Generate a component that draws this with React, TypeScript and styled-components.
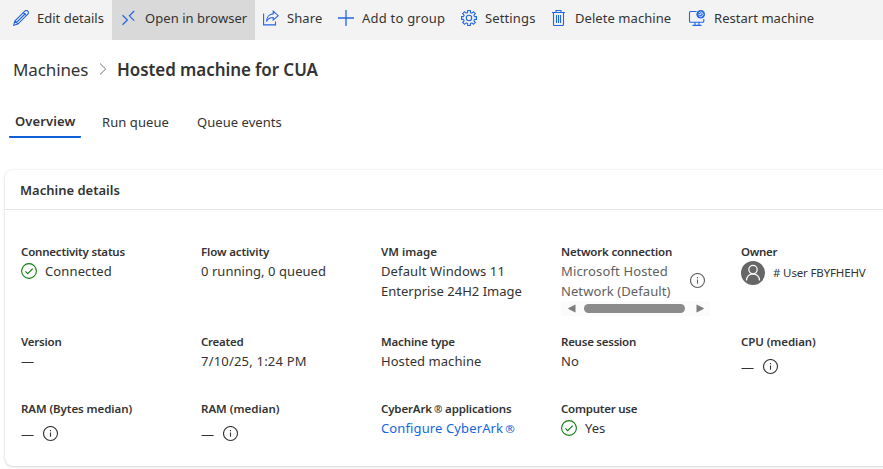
import React from "react";
import styled, { createGlobalStyle } from "styled-components";

const GlobalStyle = createGlobalStyle`
  * { box-sizing: border-box; }
  html, body { margin: 0; background: #fff; overflow: hidden; }
  body { font-family: "Noto Sans", "Open Sans", sans-serif; color: #333; }
`;

const Page = styled.div`
  width: 883px;
  height: 469px;
  overflow: hidden;
`;

const Label = styled.span<{ $ls?: number }>`
  letter-spacing: ${(p) => p.$ls ?? 0}px;
  white-space: nowrap;
`;

const Toolbar = styled.div`
  display: grid;
  grid-template-columns: 107px 143px 75px 123px 90px 137px 150px;
  height: 40px;
  padding-left: 5px;
  background: #f3f3f3;
`;

const Command = styled.button<{ $active?: boolean }>`
  display: flex;
  align-items: center;
  gap: 8px;
  border: 0;
  padding: 0 0 4px ${(p) => (p.$active ? 9 : 8)}px;
  background: ${(p) => (p.$active ? "#d9d9d9" : "transparent")};
  color: #333;
  font: 13px/20px "Noto Sans", sans-serif;
  svg { flex: none; }
`;

const Breadcrumb = styled.nav`
  display: flex;
  align-items: center;
  height: 58px;
  margin-bottom: 2px;
  padding-left: 13px;
  font-size: 17px;
  svg { margin: 0 10px 0 9px; }
`;

const CrumbLink = styled.div`
  width: 77px;
  white-space: nowrap;
`;

const CrumbTitle = styled.div`
  font-weight: 600;
  white-space: nowrap;
`;

const Tabs = styled.div`
  display: grid;
  grid-template-columns: 72px 15px 83px 12px 101px;
  height: 70px;
  padding: 8px 0 0 9px;
`;

const Tab = styled.div<{ $selected?: boolean; $column: number }>`
  grid-column: ${(p) => p.$column};
  height: 30px;
  padding-left: 6px;
  font-size: 13px;
  line-height: ${(p) => (p.$selected ? 27 : 29)}px;
  font-weight: ${(p) => (p.$selected ? 600 : 400)};
  border-bottom: 2px solid ${(p) => (p.$selected ? "#0f5fdc" : "transparent")};
  border-radius: 1px;
  white-space: nowrap;
`;

const Card = styled.section`
  height: 296px;
  width: 900px;
  margin-left: 5px;
  border-radius: 8px;
  background: #fff;
  box-shadow: 0 0 2px rgba(0, 0, 0, 0.1), 0 1px 3px rgba(0, 0, 0, 0.14);
`;

const CardHeader = styled.h2`
  height: 40px;
  margin: 0;
  padding-left: 15px;
  border-bottom: 1px solid #e6e6e6;
  font-size: 13px;
  font-weight: 600;
  line-height: 40px;
`;

const Details = styled.div`
  display: grid;
  grid-template-columns: repeat(4, 180px) 142px;
  grid-template-rows: 90px 67px 60px;
  padding: 33px 0 0 16px;
`;

const Field = styled.div`
  min-width: 0;
`;

const FieldName = styled.div<{ $ls?: number }>`
  height: 18px;
  font-size: 11.5px;
  font-weight: 600;
  line-height: 18px;
  letter-spacing: ${(p) => p.$ls ?? 0}px;
  white-space: nowrap;
`;

const Value = styled.div<{ $muted?: boolean; $link?: boolean }>`
  display: flex;
  align-items: center;
  font-size: 13px;
  line-height: 20px;
  color: ${(p) => (p.$link ? "#1267e0" : p.$muted ? "#616161" : "#333")};
  svg { flex: none; }
`;

const Status = styled(Value)`
  gap: 8px;
`;

const Lines = styled.div`
  display: flex;
  flex-direction: column;
`;

const Owner = styled(Value)`
  gap: 8px;
  font-size: 11.5px;
  height: 24px;
`;

const Metric = styled(Value)`
  gap: 8px;
  height: 31px;
`;

const Dash = styled.span`
  width: 14px;
  overflow: hidden;
  white-space: nowrap;
`;

const Registered = styled.span`
  margin-left: 2px;
  font-size: 0.88em;
`;

const Network = styled(Value)`
  width: 145px;
  justify-content: space-between;
  svg { margin-bottom: 1px; }
`;

const Scrollbar = styled.div`
  display: flex;
  align-items: center;
  width: 149px;
  height: 15px;
  padding-left: 7px;
  background: #fbfbfb;
`;

const Thumb = styled.div`
  width: 101px;
  height: 9px;
  margin: 0 11px 0 8px;
  border-radius: 5px;
  background: #8b8b8b;
`;

const Glyph = ({ children, w = 16, h = 16 }: { children: React.ReactNode; w?: number; h?: number }) => (
  <svg width={w} height={h} viewBox={`0 0 ${w} ${h}`} fill="none" stroke="#2266e3" strokeWidth="1.1">
    {children}
  </svg>
);

const Pencil = () => (
  <Glyph>
    <path d="M.7 15.3 1.8 11 11.8 1.2a2.1 2.1 0 0 1 3 3L4.9 14.1.7 15.3ZM10.3 2.7l3 3M2 11l3 3M3.5 12.5l9-9" />
  </Glyph>
);

const Remote = () => (
  <Glyph>
    <path d="M1.5 5.2 6.4 10l-4.9 4.8M13.2 1 8.4 5.8l4.8 4.8" strokeWidth="1.2" />
  </Glyph>
);

const Share = () => (
  <Glyph>
    <path d="M.6 3.5v11.4h11.9v-3.5M10.2 1.2l5 4.5-5 4.4V7.5C7.3 7.5 5 8.6 3.5 11.5 3.7 7.2 6.2 4 10.2 3.9V1.2Z" />
  </Glyph>
);

const Plus = () => (
  <Glyph>
    <path d="M8 0v16M0 8h16" strokeWidth="1.3" />
  </Glyph>
);

const gearPath = Array.from({ length: 8 }, (_, i) => {
  const at = (radius: number, degrees: number) => {
    const angle = ((i * 45 + degrees) * Math.PI) / 180;
    return `${(8 + radius * Math.cos(angle)).toFixed(2)} ${(8 + radius * Math.sin(angle)).toFixed(2)}`;
  };
  return `${i ? "L" : "M"}${at(5.8, -14)}L${at(7.7, -10)}L${at(7.7, 10)}L${at(5.8, 14)}Q${at(5.2, 22.5)} ${at(5.8, 31)}`;
}).join("");

const Gear = () => (
  <Glyph>
    <path d={gearPath + "Z"} />
    <circle cx="8" cy="8" r="2.7" />
  </Glyph>
);

const Trash = () => (
  <Glyph>
    <path d="M1 2.5h13M5 2.5v-2h5v2M2.5 2.5v12q0 1 1 1h8q1 0 1-1v-12M5.5 5v8M7.5 5v8M9.5 5v8" />
  </Glyph>
);

const Restart = () => (
  <Glyph w={18}>
    <path d="M8.5 1.5H2.5q-1 0-1 1v8.8q0 1 1 1h12.3q1 0 1-1V9M4.5 15.4h9M7 12.5v3M11 12.5v3" />
    <circle cx="12.7" cy="4.3" r="4.3" fill="#2266e3" stroke="none" />
    <path d="M10.8 3.1a2.3 2.3 0 1 1-.1 2.3M10.5 4.4h2.6M13 2.9v1.7" stroke="#fff" strokeWidth=".8" />
  </Glyph>
);

const Chevron = () => (
  <svg width="8" height="12" viewBox="0 0 8 12" fill="none" stroke="#777">
    <path d="m1 .5 5.7 5.5L1 11.5" />
  </svg>
);

const Check = () => (
  <svg width="16" height="16" viewBox="0 0 16 16" fill="none" stroke="#107c10" strokeWidth="1.1">
    <circle cx="8" cy="8" r="7.4" />
    <path d="m4.4 8.3 2.3 2.3 5-5" />
  </svg>
);

const Info = ({ color = "#333" }: { color?: string }) => (
  <svg width="16" height="16" viewBox="0 0 16 16" fill="none" stroke={color} strokeWidth="1.1">
    <circle cx="7.5" cy="7.5" r="7" />
    <path d="M7.5 6.5v4.2M7.5 4v1.2" />
  </svg>
);

const Avatar = () => (
  <svg width="24" height="24" viewBox="0 0 24 24" fill="none" stroke="#fff" strokeWidth="1.2">
    <circle cx="12" cy="12" r="12" fill="#666" stroke="none" />
    <circle cx="12" cy="8.6" r="4.2" />
    <path d="M5.5 19.5c0-4 2.8-6.7 6.5-6.7s6.5 2.7 6.5 6.7" />
  </svg>
);

const Arrow = ({ left }: { left?: boolean }) => (
  <svg width="8" height="9" viewBox="0 0 8 9" fill="#7d7d7d">
    <path d={left ? "M7.5.5v8L.5 5q-.6-.5 0-1Z" : "M.5.5v8L7.5 5q.6-.5 0-1Z"} />
  </svg>
);

const commands = [
  { text: "Edit details", icon: <Pencil />, ls: 0 },
  { text: "Open in browser", icon: <Remote />, ls: 0.05, active: true },
  { text: "Share", icon: <Share />, ls: 0.1 },
  { text: "Add to group", icon: <Plus />, ls: 0.22 },
  { text: "Settings", icon: <Gear />, ls: 0.13 },
  { text: "Delete machine", icon: <Trash />, ls: 0.06 },
  { text: "Restart machine", icon: <Restart />, ls: 0.04 },
];

const Median = ({ name, ls }: { name: string; ls?: number }) => (
  <Field>
    <FieldName $ls={ls}>{name}</FieldName>
    <Metric><Dash>—</Dash><Info /></Metric>
  </Field>
);

export default function App() {
  return (
    <Page>
      <GlobalStyle />
      <Toolbar>
        {commands.map((c) => (
          <Command key={c.text} $active={c.active}>
            {c.icon}
            <Label $ls={c.ls}>{c.text}</Label>
          </Command>
        ))}
      </Toolbar>
      <Breadcrumb>
        <CrumbLink><Label $ls={-0.12}>Machines</Label></CrumbLink>
        <Chevron />
        <CrumbTitle><Label $ls={-0.08}>Hosted machine for CUA</Label></CrumbTitle>
      </Breadcrumb>
      <Tabs>
        <Tab $column={1} $selected><Label $ls={0.1}>Overview</Label></Tab>
        <Tab $column={3}><Label $ls={0.08}>Run queue</Label></Tab>
        <Tab $column={5}><Label $ls={0.05}>Queue events</Label></Tab>
      </Tabs>
      <Card>
        <CardHeader><Label $ls={0}>Machine details</Label></CardHeader>
        <Details>
          <Field>
            <FieldName $ls={-0.2}>Connectivity status</FieldName>
            <Status><Check /><Label $ls={0.12}>Connected</Label></Status>
          </Field>
          <Field>
            <FieldName $ls={-0.13}>Flow activity</FieldName>
            <Value><Label $ls={0.05}>0 running, 0 queued</Label></Value>
          </Field>
          <Field>
            <FieldName>VM image</FieldName>
            <Value>
              <Lines>
                <Label $ls={0.12}>Default Windows 11</Label>
                <Label>Enterprise 24H2 Image</Label>
              </Lines>
            </Value>
          </Field>
          <Field>
            <FieldName $ls={-0.18}>Network connection</FieldName>
            <Network $muted>
              <Lines>
                <Label $ls={0.14}>Microsoft Hosted</Label>
                <Label $ls={0.08}>Network (Default)</Label>
              </Lines>
              <Info color="#616161" />
            </Network>
            <Scrollbar><Arrow left /><Thumb /><Arrow /></Scrollbar>
          </Field>
          <Field>
            <FieldName $ls={-0.3}>Owner</FieldName>
            <Owner><Avatar /><Label $ls={-0.15}># User FBYFHEHV</Label></Owner>
          </Field>
          <Field>
            <FieldName $ls={-0.22}>Version</FieldName>
            <Value><Dash>—</Dash></Value>
          </Field>
          <Field>
            <FieldName $ls={-0.25}>Created</FieldName>
            <Value><Label $ls={0.2}>7/10/25, 1:24 PM</Label></Value>
          </Field>
          <Field>
            <FieldName $ls={-0.15}>Machine type</FieldName>
            <Value><Label $ls={0.06}>Hosted machine</Label></Value>
          </Field>
          <Field>
            <FieldName $ls={-0.25}>Reuse session</FieldName>
            <Value><Label>No</Label></Value>
          </Field>
          <Median name="CPU (median)" ls={-0.08} />
          <Median name="RAM (Bytes median)" ls={-0.08} />
          <Median name="RAM (median)" />
          <Field>
            <FieldName $ls={-0.14}>CyberArk<Registered>®</Registered> applications</FieldName>
            <Value $link><Label $ls={0.12}>Configure CyberArk<Registered>®</Registered></Label></Value>
          </Field>
          <Field>
            <FieldName $ls={-0.25}>Computer use</FieldName>
            <Status><Check /><Label>Yes</Label></Status>
          </Field>
        </Details>
      </Card>
    </Page>
  );
}
